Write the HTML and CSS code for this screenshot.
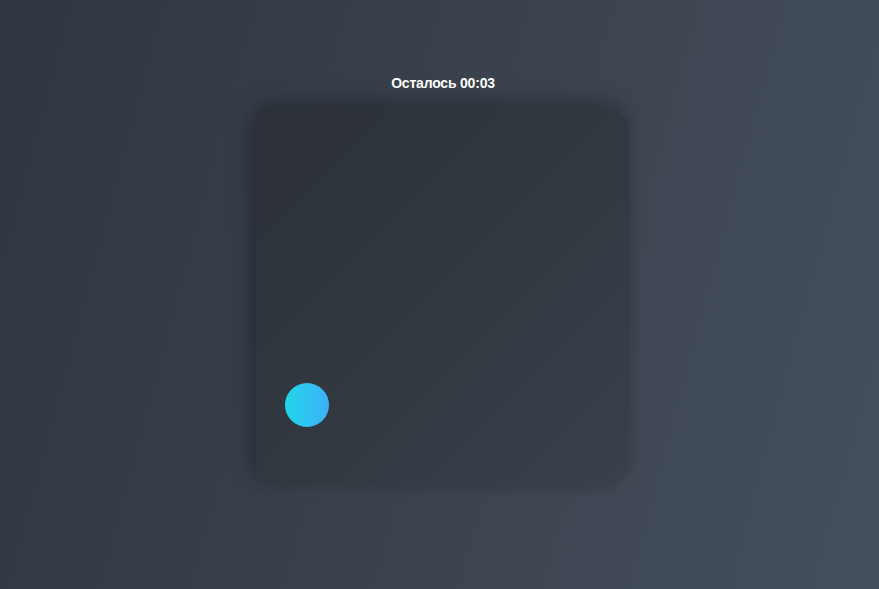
FILE: index.html
```html
<!DOCTYPE html>
<html lang="ru">
<head>
<meta charset="utf-8">
<title>Игра</title>
<link rel="stylesheet" href="styles.css">
</head>
<body>
<main class="stage">
  <div class="timer">Осталось 00:03</div>
  <div class="field">
    <div class="ball" style="left:29px; top:275px;"></div>
  </div>
</main>
</body>
</html>
```
FILE: styles.css
```css
html, body {
  margin: 0;
  height: 100%;
}
body {
  background: linear-gradient(105deg, #30363f 0%, #3a424d 50%, #454f5d 100%);
  font-family: "Liberation Sans", Arial, sans-serif;
  color: #fff;
  overflow: hidden;
}
.stage {
  display: flex;
  flex-direction: column;
  align-items: center;
  padding-top: 75px;
  padding-left: 7px;
}
.timer {
  font-size: 14px;
  font-weight: 700;
  line-height: 16px;
  letter-spacing: -0.2px;
}
.field {
  position: relative;
  margin-top: 17px;
  width: 374px;
  height: 378px;
  border-radius: 24px;
  background: linear-gradient(135deg, #2b3039 0%, #323840 50%, #3a414b 100%);
  box-shadow: -6px -6px 24px rgba(0, 0, 0, 0.22), 8px 8px 24px rgba(255, 255, 255, 0.035), 0 0 14px rgba(0, 0, 0, 0.15);
}
.ball {
  position: absolute;
  width: 44px;
  height: 44px;
  border-radius: 50%;
  background: linear-gradient(90deg, #22d6ea 0%, #3eb0f6 100%);
}
```
